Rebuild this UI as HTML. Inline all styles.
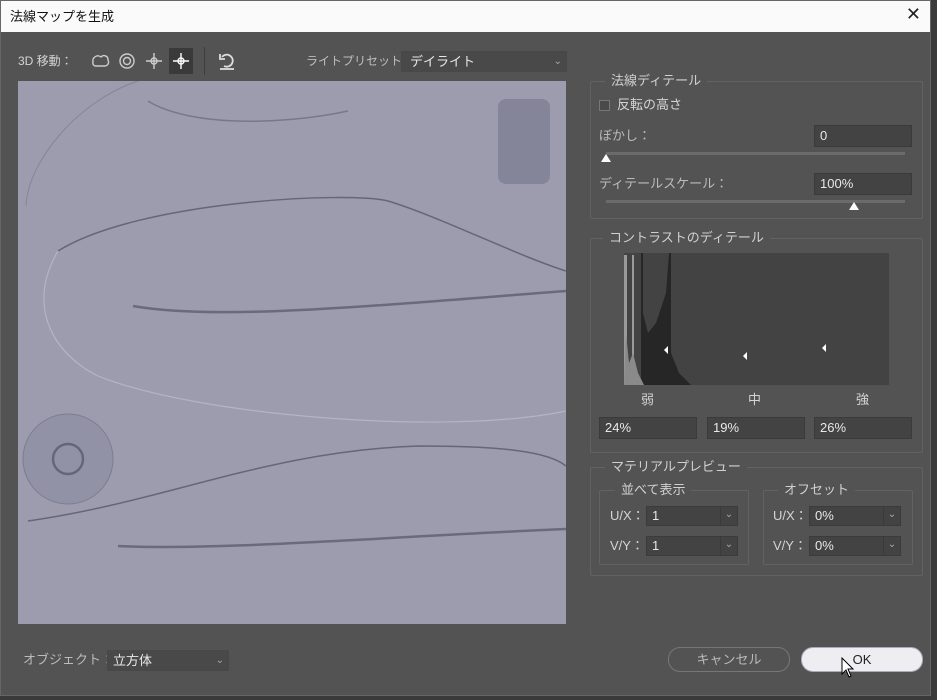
<!DOCTYPE html>
<html><head><meta charset="utf-8"><style>
*{box-sizing:border-box;margin:0;padding:0}
body{width:937px;height:700px;background:#3a3a3a;font-family:"Liberation Sans","Noto Sans CJK JP",sans-serif;font-size:13px;line-height:16px;color:#d4d4d4;position:relative;overflow:hidden}
.dlg{position:absolute;left:0;top:0;width:931px;height:696px;background:#535353;border:1px solid #666}
.title{position:absolute;left:0;top:0;width:100%;height:31px;background:#fafafa;color:#111;font-size:13px;padding:8px 0 0 9px}
.x{position:absolute;right:9px;top:5px;font-size:18px;color:#222}
.a{position:absolute;white-space:nowrap}
.inp{position:absolute;background:#434343;border:1px solid #3b3b3b;color:#e8e8e8;padding:0 0 0 5px;font-size:13px}
fieldset{position:absolute;border:1px solid #626262;border-radius:2px}
.lg{position:absolute;background:#535353;padding:0 6px;font-size:13px;color:#d0d0d0}
.dd{position:absolute;width:17px;top:0;bottom:0;right:0;border-left:1px solid #3a3a3a;font-size:10px;text-align:center;line-height:16px;color:#aaa}
.track{position:absolute;height:3px;background:#6b6b6b}
.thumb{position:absolute;width:0;height:0;border-left:5px solid transparent;border-right:5px solid transparent;border-bottom:8px solid #fff}
.btn{position:absolute;border-radius:12px;height:25px;text-align:center;line-height:23px}
</style></head><body>
<div class="dlg">
<div class="title">法線マップを生成<span class="x">✕</span></div>
<div class="a" style="left:17px;top:52px;font-size:12px">3D 移動：</div>
<svg class="a" style="left:88px;top:47px" width="110" height="26" viewBox="0 0 110 26" fill="none" stroke="#ccc" stroke-width="1.4">
<path d="M4 14a5 5 0 0 1 8-5a4 4 0 0 1 7 3a4 4 0 0 1-3 6h-9a3 3 0 0 1-3-4z"/>
<circle cx="38" cy="13" r="7"/><circle cx="38" cy="13" r="3.5"/>
<path d="M65 5v16M57 13h16"/><circle cx="65" cy="13" r="3"/>
<rect x="80" y="0" width="24" height="26" fill="#3a3a3a" stroke="none"/>
<path d="M92 5v16M84 13h16" stroke="#fff"/><circle cx="92" cy="13" r="3" stroke="#fff"/>
</svg>
<div class="a" style="left:203px;top:46px;width:1px;height:28px;background:#3d3d3d"></div>
<svg class="a" style="left:216px;top:49px" width="20" height="22" viewBox="0 0 20 22" fill="none" stroke="#ddd" stroke-width="1.8"><path d="M5 7a6 6 0 1 1 2 9"/><path d="M3 4v5h5"/><path d="M3 19h14"/></svg>
<div class="a" style="left:305px;top:52px;font-size:12px;color:#bdbdbd">ライトプリセット：</div>
<div class="inp" style="left:400px;top:50px;width:166px;height:21px;background:#494949;border-color:#484848;padding-left:8px;line-height:19px">デイライト<span style="position:absolute;right:4px;top:0;font-size:10px;color:#aaa">⌄</span></div>
<svg class="a" style="left:17px;top:80px" width="548" height="543" viewBox="0 0 548 543">
<rect width="548" height="543" fill="#9c9cae"/>
<path d="M8 125C10 80 60 20 120 0" stroke="#85859a" fill="none"/>
<path d="M130 20C170 45 260 45 330 30" stroke="#78788c" fill="none" stroke-width="1.5"/>
<rect x="480" y="18" width="52" height="85" rx="8" fill="#85859a"/>
<path d="M40 170C120 120 330 110 370 120C420 135 500 175 548 190" stroke="#66667a" fill="none" stroke-width="1.5"/>
<path d="M40 170C10 220 30 270 80 295C180 335 430 355 548 330" stroke="#b4b4c4" fill="none" stroke-width="1.2"/>
<path d="M115 225C200 240 350 225 548 210" stroke="#6a6a7c" stroke-width="2.5" fill="none"/>
<circle cx="50" cy="378" r="45" fill="#9292a6" stroke="#7d7d90"/>
<circle cx="50" cy="378" r="15" fill="none" stroke="#66667a" stroke-width="2.5"/>
<path d="M10 440C150 420 250 370 400 365C480 365 530 370 548 385" stroke="#66667a" stroke-width="1.5" fill="none"/>
<path d="M100 465C200 470 380 455 548 448" stroke="#6a6a7c" stroke-width="2.5" fill="none"/>
</svg>
<fieldset style="left:589px;top:80px;width:333px;height:138px"></fieldset>
<div class="lg" style="left:604px;top:72px">法線ディテール</div>
<div class="a" style="left:598px;top:99px;width:11px;height:11px;border:1px solid #777;background:#4a4a4a"></div>
<div class="a" style="left:616px;top:96px">反転の高さ</div>
<div class="a" style="left:598px;top:127px;color:#bbb">ぼかし：</div>
<div class="inp" style="left:813px;top:124px;width:98px;height:22px;line-height:20px">0</div>
<div class="track" style="left:605px;top:151px;width:299px"></div>
<div class="thumb" style="left:600px;top:153px"></div>
<div class="a" style="left:598px;top:175px;color:#bbb">ディテールスケール：</div>
<div class="inp" style="left:813px;top:172px;width:98px;height:22px;line-height:20px">100%</div>
<div class="track" style="left:605px;top:199px;width:299px"></div>
<div class="thumb" style="left:848px;top:201px"></div>
<fieldset style="left:589px;top:237px;width:333px;height:215px"></fieldset>
<div class="lg" style="left:602px;top:229px">コントラストのディテール</div>
<svg class="a" style="left:623px;top:252px" width="265" height="132" viewBox="0 0 265 132">
<rect width="265" height="132" fill="#434343"/>
<path d="M0 132V2h3v130zM8 132V2h2v130" fill="#9a9a9a"/>
<path d="M17 132V0h2v60l5 20 8 -10 10 -30 3-40h2v100l8 20 12 12z" fill="#262626"/>
<path d="M0 132L2 80 5 110 9 100 14 120 20 132z" fill="#8a8a8a"/>
<path d="M40 97l4-4v8zM119 103l4-4v8zM198 95l4-4v8z" fill="#fff"/>
</svg>
<div class="a" style="left:640px;top:391px">弱</div>
<div class="a" style="left:747px;top:391px">中</div>
<div class="a" style="left:855px;top:391px">強</div>
<div class="inp" style="left:598px;top:416px;width:98px;height:22px;line-height:20px">24%</div>
<div class="inp" style="left:706px;top:416px;width:98px;height:22px;line-height:20px">19%</div>
<div class="inp" style="left:813px;top:416px;width:98px;height:22px;line-height:20px">26%</div>
<fieldset style="left:589px;top:466px;width:333px;height:109px"></fieldset>
<div class="lg" style="left:604px;top:458px">マテリアルプレビュー</div>
<fieldset style="left:598px;top:489px;width:150px;height:75px"></fieldset>
<div class="lg" style="left:614px;top:481px">並べて表示</div>
<fieldset style="left:762px;top:489px;width:150px;height:75px"></fieldset>
<div class="lg" style="left:777px;top:481px">オフセット</div>
<div class="a" style="left:609px;top:507px">U/X：</div>
<div class="inp" style="left:645px;top:505px;width:92px;height:20px;line-height:18px">1<span class="dd">⌄</span></div>
<div class="a" style="left:609px;top:537px">V/Y：</div>
<div class="inp" style="left:645px;top:535px;width:92px;height:20px;line-height:18px">1<span class="dd">⌄</span></div>
<div class="a" style="left:772px;top:507px">U/X：</div>
<div class="inp" style="left:808px;top:505px;width:92px;height:20px;line-height:18px">0%<span class="dd">⌄</span></div>
<div class="a" style="left:772px;top:537px">V/Y：</div>
<div class="inp" style="left:808px;top:535px;width:92px;height:20px;line-height:18px">0%<span class="dd">⌄</span></div>
<div class="a" style="left:22px;top:651px;color:#bbb">オブジェクト：</div>
<div class="inp" style="left:106px;top:649px;width:122px;height:21px;background:#494949;border-color:#484848;line-height:19px">立方体<span style="position:absolute;right:4px;top:0;font-size:10px;color:#aaa">⌄</span></div>
<div class="btn" style="left:667px;top:646px;width:122px;border:1px solid #777;color:#bbb">キャンセル</div>
<div class="btn" style="left:800px;top:646px;width:122px;background:#ededf2;border:1px solid #aab;color:#222">OK</div>
<svg class="a" style="left:840px;top:656px" width="14" height="22" viewBox="0 0 14 22"><path d="M1 1v16l4-4 3 7 2-1-3-7h5z" fill="#fff" stroke="#000"/></svg>
</div>
</body></html>
